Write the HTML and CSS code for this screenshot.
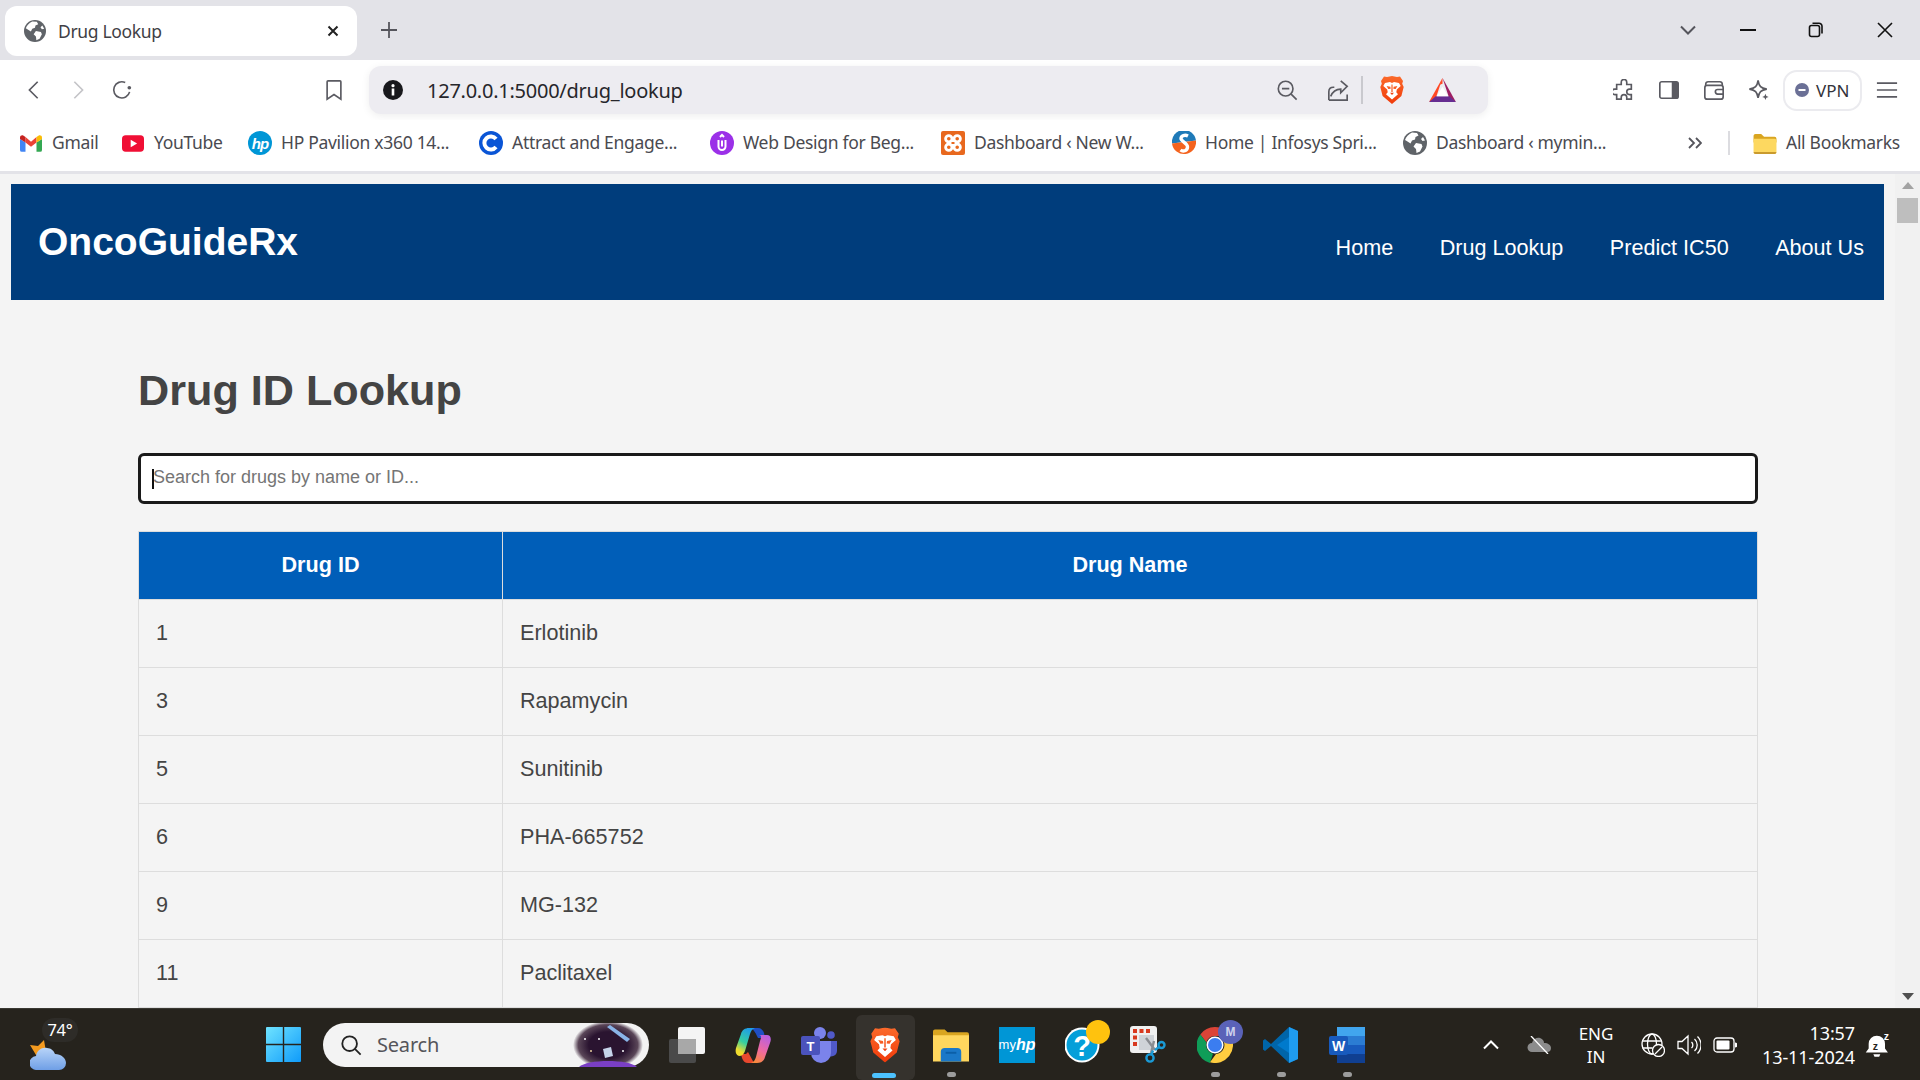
FILE: index.html
```html
<!DOCTYPE html>
<html lang="en">
<head>
<meta charset="utf-8">
<title>Drug Lookup</title>
<link rel="stylesheet" href="styles.css">
</head>
<body>
<svg class="defs" aria-hidden="true">
  <symbol id="globe" viewBox="0 0 24 24">
    <circle cx="12" cy="12" r="12" fill="#5f6368"/>
    <path fill="#fff" d="M9 1.500 14 2l1.500 2.500-3 1.500-.5 2.500-3 1-1.500 3-3-2-2.500-1.500C3 6 5.500 3 9 1.500zM13 12l5.500 1 1 2.500-2.500 5-3.500 1.500-.5-4-2.500-2.500zM20 6l2 3.500-2.500.5-1.500-2z"/>
  </symbol>
  <symbol id="brave" viewBox="0 0 24 28">
    <defs><linearGradient id="braveg" x1="0" y1="0" x2="0" y2="1"><stop offset="0" stop-color="#fb6a2b"/><stop offset="1" stop-color="#f03a0a"/></linearGradient></defs>
    <path fill="url(#braveg)" d="M12 0l5 1 3-.4 3 4.400-.8 2.800 1.500 3.200-2.300 9L12 28l-9.400-8-2.300-9 1.500-3.200L1 5 4 .6 7 1z"/>
    <path fill="#fff" d="M5 7l5-.9 2 .9 2-.9L19 7l1.700 3-3.900 3.400-.5 2.900 1.700 2L12 23.500l-6-5.200 1.700-2-.5-2.900L3.300 10z"/>
    <path fill="url(#braveg)" d="M6.600 10l3.800.7.300 2-2.400.2zM17.400 10l-3.800.7-.3 2 2.400.2zM10 16.800h4l-2 2.200zM11.400 8.500h1.200v7.500h-1.200z"/>
  </symbol>
</svg>

<div class="titlebar">
  <div class="tab">
    <svg class="tab-icon" viewBox="0 0 24 24"><use href="#globe"/></svg>
    <span class="tab-title">Drug Lookup</span>
    <svg class="tab-close" viewBox="0 0 12 12"><path d="M1.500 1.500l9 9M10.500 1.500l-9 9"/></svg>
  </div>
  <svg class="newtab" viewBox="0 0 18 18"><path d="M9 1v16M1 9h16"/></svg>
  <div class="win-controls">
    <svg class="wc-caret" viewBox="0 0 16 10"><path d="M1 1.500l7 7 7-7"/></svg>
    <svg class="wc wc-min" viewBox="0 0 16 16"><path d="M0 8h16"/></svg>
    <svg class="wc wc-max" viewBox="0 0 16 16"><rect x="1.500" y="3.500" width="10" height="11" rx="2"/><path d="M4.500 1.200h6.500a3 3 0 0 1 3 3v7.300"/></svg>
    <svg class="wc wc-close" viewBox="0 0 16 16"><path d="M1 1l14 14M15 1L1 15"/></svg>
  </div>
</div>

<div class="toolbar">
  <div class="tb-cell"><svg class="ic" viewBox="0 0 24 24"><path d="M16 3l-9 9 9 9"/></svg></div>
  <div class="tb-cell"><svg class="ic ic-off" viewBox="0 0 24 24"><path d="M8 3l9 9-9 9"/></svg></div>
  <div class="tb-cell"><svg class="ic" viewBox="0 0 24 24"><path d="M20.300 14A8.800 8.800 0 1 1 15.500 3.900"/><circle class="ic-dot" cx="20" cy="9.500" r="2"/></svg></div>
  <div class="tb-cell tb-bookmark"><svg class="ic" viewBox="0 0 24 24"><path d="M5.500 2h13a1 1 0 0 1 1 1v19L12 17 4.500 22V3a1 1 0 0 1 1-1z"/></svg></div>
  <div class="urlbar">
    <svg class="url-info" viewBox="0 0 20 20"><circle cx="10" cy="10" r="10" fill="#18181c"/><rect x="8.700" y="8.500" width="2.600" height="7" fill="#fff"/><circle cx="10" cy="5.700" r="1.600" fill="#fff"/></svg>
    <span class="url-text">127.0.0.1:5000/drug_lookup</span>
    <div class="url-actions">
      <div class="ua-cell"><svg class="ic" viewBox="0 0 24 24"><circle cx="10.500" cy="10.500" r="8"/><path d="M6.500 10.500h8M16.500 16.500l6 6"/></svg></div>
      <div class="ua-cell"><svg class="ic" viewBox="0 0 24 24"><path d="M2 23V14c0-3 2-5 5-5h1M15 2l7 6-7 7V11c-5 0-9 3-11 8M2 23h20V17"/></svg></div>
      <span class="ua-sep"></span>
      <div class="ua-cell"><svg class="ic-brave" viewBox="0 0 24 28"><use href="#brave"/></svg></div>
      <div class="ua-cell"><svg class="ic-bat" viewBox="0 0 28 26">
        <path fill="#ff4724" d="M14 0L0 25l7-4z"/>
        <path fill="#9e1f63" d="M14 0l14 25-7-4z"/>
        <path fill="#662d91" d="M0 25h28l-7-6H7z"/>
        <path fill="#ff4724" d="M14 0l-3 7 3-1z"/>
        <path fill="#fff" d="M14 9l6 10H8z"/>
      </svg></div>
    </div>
  </div>
  <div class="tb-right">
    <div class="tr-cell"><svg class="ic" viewBox="0 0 24 24"><path d="M9 3.500a3 3 0 0 1 6 0V6h5v5h-2a3 3 0 0 0 0 6h2v5H15v-2a3 3 0 0 0-6 0v2H4v-5H2a3 3 0 0 1 0-6h2V6h5z"/></svg></div>
    <div class="tr-cell"><svg class="ic" viewBox="0 0 24 24"><rect x="2" y="3" width="20" height="18" rx="2"/><path class="ic-fill" d="M15 3h5a2 2 0 0 1 2 2v14a2 2 0 0 1-2 2h-5z"/></svg></div>
    <div class="tr-cell"><svg class="ic" viewBox="0 0 24 24"><path d="M3 7V5.500A2.500 2.500 0 0 1 5.500 3h13A2.500 2.500 0 0 1 21 5.500V7"/><rect x="2" y="7" width="20" height="15" rx="2.500"/><path d="M22 11.500h-6a2.500 2.500 0 0 0 0 5h6"/></svg></div>
    <div class="tr-cell"><svg class="ic" viewBox="0 0 24 24"><path d="M11 1.500c1 6.500 3 8.500 9.500 9.500-6.500 1-8.500 3-9.500 9.500-1-6.500-3-8.500-9.500-9.500 6.500-1 8.500-3 9.500-9.500z"/><path class="ic-fill" d="M19 16l1 2.500 2.500 1-2.500 1-1 2.500-1-2.500-2.500-1 2.500-1z"/></svg></div>
    <div class="vpn"><svg class="vpn-dot" viewBox="0 0 14 14"><circle cx="7" cy="7" r="7" fill="#6b7096"/><rect x="3.500" y="6" width="7" height="2" fill="#fff"/></svg><span>VPN</span></div>
    <div class="tr-cell tr-menu"><svg class="ic" viewBox="0 0 24 24"><path d="M1 4.500h22M1 12h22M1 19.500h22"/></svg></div>
  </div>
</div>

<div class="bookmarks">
  <div class="bm">
    <svg class="bm-icon" viewBox="0 0 24 18"><path fill="#4285f4" d="M2 18h4V8L0 4v12a2 2 0 0 0 2 2z"/><path fill="#34a853" d="M18 18h4a2 2 0 0 0 2-2V4l-6 4z"/><path fill="#ea4335" d="M6 8V2l6 5 6-5v6l-6 4.500z"/><path fill="#fbbc04" d="M18 2v6l6-4V2.500c0-2-2.300-3.100-3.900-2z"/><path fill="#c5221f" d="M0 4l6 4V2L3.900.5C2.300-.6 0 .5 0 2.500z"/></svg>
    <span class="bm-text">Gmail</span>
  </div>
  <div class="bm">
    <svg class="bm-icon" viewBox="0 0 24 18"><rect width="24" height="18" rx="4" fill="#f00f35"/><path fill="#fff" d="M9.500 5l7 4-7 4z"/></svg>
    <span class="bm-text">YouTube</span>
  </div>
  <div class="bm">
    <span class="bm-hp">hp</span>
    <span class="bm-text">HP Pavilion x360 14...</span>
  </div>
  <div class="bm">
    <svg class="bm-icon-tall" viewBox="0 0 24 24"><circle cx="12" cy="12" r="12" fill="#0a55d6"/><path fill="none" stroke="#fff" stroke-width="4" d="M17 8a6.500 6.500 0 1 0 0 8"/></svg>
    <span class="bm-text">Attract and Engage...</span>
  </div>
  <div class="bm">
    <svg class="bm-icon-tall" viewBox="0 0 24 24"><circle cx="12" cy="12" r="12" fill="#9b30e8"/><path fill="none" stroke="#fff" stroke-width="2" d="M8.500 9v6.500a3.500 3.500 0 0 0 7 0V9"/><path fill="none" stroke="#fff" stroke-width="2" d="M12 9.500v6M10 6l2-2 2 2"/></svg>
    <span class="bm-text">Web Design for Beg...</span>
  </div>
  <div class="bm">
    <svg class="bm-icon-tall" viewBox="0 0 24 24"><rect width="24" height="24" rx="2" fill="#e8681e"/><g fill="none" stroke="#fff" stroke-width="2.800"><circle cx="7.800" cy="7.800" r="3.200"/><circle cx="16.200" cy="7.800" r="3.200"/><circle cx="7.800" cy="16.200" r="3.200"/><circle cx="16.200" cy="16.200" r="3.200"/></g><path fill="#fff" d="M9 9h6v6H9z"/><path fill="#e8681e" d="M10.500 11h3v2h-3z"/></svg>
    <span class="bm-text">Dashboard ‹ New W...</span>
  </div>
  <div class="bm">
    <svg class="bm-icon-tall" viewBox="0 0 24 24"><path fill="#1f7ab8" d="M0 12.500a12 12 0 0 1 24-3z"/><path fill="#f4631e" d="M0 12.500l24-3A12 12 0 0 1 0 12.500z"/><path fill="none" stroke="#fff" stroke-width="3.400" d="M16 5c-3-1.500-7-.5-7 2.500s6.500 4.500 6.500 8.500-4.500 5-7 3"/></svg>
    <span class="bm-text">Home | Infosys Spri...</span>
  </div>
  <div class="bm">
    <svg class="bm-icon-tall" viewBox="0 0 24 24"><use href="#globe"/></svg>
    <span class="bm-text">Dashboard ‹ mymin...</span>
  </div>
  <svg class="bm-more" viewBox="0 0 14 12"><path d="M1 1l5 5-5 5M8 1l5 5-5 5"/></svg>
  <span class="bm-sep"></span>
  <div class="bm-all">
    <svg class="bm-folder" viewBox="0 0 24 22"><path fill="#d9a520" d="M0 3a2 2 0 0 1 2-2h6l3 3h11a2 2 0 0 1 2 2v4H0z"/><path fill="#fdd860" d="M0 6h22a2 2 0 0 1 2 2v12a2 2 0 0 1-2 2H2a2 2 0 0 1-2-2z"/><path fill="#c99a2e" d="M0 20h24a2 2 0 0 1-2 2H2a2 2 0 0 1-2-2z"/></svg>
    <span class="bm-text">All Bookmarks</span>
  </div>
</div>

<div class="viewport">
  <div class="page">
    <header class="site-header">
      <div class="logo">OncoGuideRx</div>
      <nav class="site-nav">
        <a>Home</a><a>Drug Lookup</a><a>Predict IC50</a><a>About Us</a>
      </nav>
    </header>
    <main class="content">
      <h1 class="title">Drug ID Lookup</h1>
      <div class="search-wrap">
        <input class="search" type="text" placeholder="Search for drugs by name or ID...">
        <span class="caret"></span>
      </div>
      <table class="drugs">
        <thead><tr><th class="col-id">Drug ID</th><th>Drug Name</th></tr></thead>
        <tbody>
          <tr><td>1</td><td>Erlotinib</td></tr>
          <tr><td>3</td><td>Rapamycin</td></tr>
          <tr><td>5</td><td>Sunitinib</td></tr>
          <tr><td>6</td><td>PHA-665752</td></tr>
          <tr><td>9</td><td>MG-132</td></tr>
          <tr><td>11</td><td>Paclitaxel</td></tr>
        </tbody>
      </table>
    </main>
  </div>
  <div class="scrollbar">
    <span class="sb-up"></span>
    <span class="sb-thumb"></span>
    <span class="sb-down"></span>
  </div>
</div>

<footer class="taskbar">
  <div class="weather">
    <svg class="weather-icon" viewBox="0 0 36 30">
      <path fill="#f39a1f" d="M0 5l8 1 6-6 2 12-10 3z"/>
      <defs><linearGradient id="cloud" x1="0" y1="0" x2="0" y2="1"><stop offset="0" stop-color="#b8d4f8"/><stop offset="1" stop-color="#6f9fe6"/></linearGradient></defs>
      <path fill="url(#cloud)" d="M7 30a7 7 0 0 1-1-14c1-6 6-9 11-8 4 0 7 3 8 6 6 0 11 4 11 9a7 7 0 0 1-7 7z"/>
    </svg>
    <span class="temp">74°</span>
  </div>
  <div class="start">
    <svg viewBox="0 0 35 35"><defs><linearGradient id="win" x1="0" y1="0" x2="1" y2="1"><stop offset="0" stop-color="#6fe3ff"/><stop offset="1" stop-color="#0f9bfa"/></linearGradient></defs><path fill="url(#win)" d="M1 0h15.800v16.800H0V1a1 1 0 0 1 1-1zM18.200 0H34a1 1 0 0 1 1 1v15.800H18.200zM0 18.200h16.800V35H1a1 1 0 0 1-1-1zM18.200 18.200H35V34a1 1 0 0 1-1 1H18.200z"/></svg>
  </div>
  <div class="ts-search">
    <svg class="ts-glass" viewBox="0 0 24 24"><circle cx="10.500" cy="10.500" r="8"/><path d="M16.500 16.500l6 6"/></svg>
    <span class="ts-label">Search</span>
    <svg class="ts-art" viewBox="0 0 70 44">
      <defs><radialGradient id="space"><stop offset=".55" stop-color="#2a1430"/><stop offset=".85" stop-color="#5a4658"/><stop offset="1" stop-color="#f3f3f3"/></radialGradient></defs>
      <ellipse cx="35" cy="22" rx="35" ry="24" fill="url(#space)"/>
      <path fill="#7a3fc4" d="M6 44c8-8 50-8 58 0z"/>
      <path fill="#8ab4e8" d="M34 4l3-2 20 14-3 3z"/>
      <path fill="#c6d4ea" d="M30 26l8-2 2 9-8 2z"/>
      <circle cx="12" cy="16" r="1" fill="#fff"/><circle cx="26" cy="16" r="1" fill="#fff"/><circle cx="50" cy="28" r="1" fill="#fff"/><circle cx="18" cy="28" r="1" fill="#e8d0a0"/>
    </svg>
  </div>
  <div class="apps">
    <div class="app"><svg class="app-icon" viewBox="0 0 36 36"><rect x="0" y="12" width="27" height="24" rx="2" fill="#4a4a4a"/><rect x="9" y="0" width="27" height="27" rx="2" fill="#f4f4f4"/><rect x="9" y="12" width="18" height="15" fill="#a8a8a8"/></svg></div>
    <div class="app"><svg class="app-icon" viewBox="0 0 36 36">
      <defs>
        <linearGradient id="cp1" x1=".6" y1="0" x2=".2" y2="1"><stop offset="0" stop-color="#1f9de8"/><stop offset=".5" stop-color="#35cfa0"/><stop offset=".85" stop-color="#f0dc2e"/></linearGradient>
        <linearGradient id="cp2" x1=".7" y1="0" x2=".3" y2="1"><stop offset="0" stop-color="#b85fe0"/><stop offset=".55" stop-color="#f06aa0"/><stop offset="1" stop-color="#f9893c"/></linearGradient>
      </defs>
      <path fill="#1f4fc4" d="M16 1h7c3 0 5 2 6 5l1 5h-7c-2-4-3-7-7-10z"/>
      <path fill="#e8482e" d="M13 25l6 11h-6c-3 0-5-2-6-5l-1-4h5z"/>
      <path fill="url(#cp1)" d="M14 1h6c-3 1-4 3-5 6L10 24c-1 3-3 5-6 5-3-1-4-4-3-8L6 7c1-4 4-6 8-6z"/>
      <path fill="url(#cp2)" d="M24 8h8c3 0 5 3 3 8l-5 14c-1 4-4 6-8 6h-6c3-1 4-3 5-6l4-16c1-3 2-6 -1-6z"/>
    </svg></div>
    <div class="app"><svg class="app-icon" viewBox="0 0 36 36"><circle cx="19" cy="6" r="6" fill="#7b83eb"/><circle cx="30" cy="8" r="3.800" fill="#5059c9"/><path fill="#5059c9" d="M26 14h10v10a6 6 0 0 1-10 4z"/><path fill="#7b83eb" d="M10 14h20v12a10 10 0 0 1-20 0z"/><rect x="0" y="9" width="19" height="19" rx="2" fill="#4b53bc"/><text class="app-t" x="9.500" y="24" text-anchor="middle">T</text></svg></div>
    <div class="app app-active"><svg class="app-brave" viewBox="0 0 24 28"><use href="#brave"/></svg><span class="active-bar"></span></div>
    <div class="app app-run"><svg class="app-icon" viewBox="0 0 37 34"><path fill="#d9a520" d="M0 3a2 2 0 0 1 2-2h10l3 3h20a2 2 0 0 1 2 2v6H0z"/><path fill="#ffd75e" d="M0 7h37v27H0z"/><path fill="#1a78c8" d="M8 30v-6a4 4 0 0 1 4-4h13a4 4 0 0 1 4 4v10H8z"/><path fill="#0b5fa8" d="M13 24h11v2H13z"/></svg><span class="dot"></span></div>
    <div class="app"><div class="myhp">my<i>hp</i></div></div>
    <div class="app"><svg class="app-icon" viewBox="0 0 36 36"><circle cx="17" cy="18" r="17.500" fill="#fff"/><circle cx="17" cy="18" r="15.500" fill="#049fd9"/><text class="app-q" x="17" y="29" text-anchor="middle">?</text></svg><span class="badge-y"></span></div>
    <div class="app"><svg class="app-icon app-snip" viewBox="0 0 38 38"><rect width="27" height="27" rx="3" fill="#f0f0f0"/><path fill="#d8391f" d="M3 3h4v4H3zM9.500 3h4v4h-4zM16 3h4v4h-4zM3 9.500h4v4H3zM3 16h4v4H3z"/><rect x="9" y="9" width="15" height="15" fill="#cfd3d8"/><path fill="none" stroke="#8a8d92" stroke-width="2.400" d="M16 12l9 12M24 15l-3 12"/><circle cx="31.500" cy="19" r="3" fill="none" stroke="#1a9ad6" stroke-width="2.400"/><circle cx="20" cy="32" r="3.600" fill="none" stroke="#1a9ad6" stroke-width="2.400"/><path stroke="#1a9ad6" stroke-width="2.400" d="M29 21l-4 3M21.500 28.500l1.500-4"/></svg></div>
    <div class="app app-run"><svg class="app-icon" viewBox="0 0 36 36"><path fill="#db4437" d="M18 0a18 18 0 0 1 15.600 9H18a9 9 0 0 0-8.600 6.500L3.300 7.500A18 18 0 0 1 18 0z"/><path fill="#0f9d58" d="M3.300 7.500l6.100 8A9 9 0 0 0 16 26.800L13 36A18 18 0 0 1 3.300 7.500z"/><path fill="#ffcd40" d="M33.600 9A18 18 0 0 1 13 35.300l6-8.400A9 9 0 0 0 26 13z"/><circle cx="18" cy="18" r="8.500" fill="#fff"/><circle cx="18" cy="18" r="7" fill="#3b7df0"/></svg><span class="badge-m">M</span><span class="dot"></span></div>
    <div class="app app-run"><svg class="app-icon" viewBox="0 0 36 36"><path fill="#0065a9" d="M26 0l9 4v28l-9 4L8 19l-6 5-2-1.500V13.500L2 12l6 5z"/><path fill="#1f9cf0" d="M26 0l9 4v28l-9 4z"/><path fill="#007acc" d="M26 10L14 18l12 8z"/></svg><span class="dot"></span></div>
    <div class="app app-run"><svg class="app-icon" viewBox="0 0 36 36"><rect x="8" y="0" width="28" height="36" rx="2" fill="#2b7cd3"/><rect x="8" y="0" width="28" height="9" fill="#41a5ee"/><rect x="8" y="18" width="28" height="9" fill="#185abd"/><rect x="8" y="27" width="28" height="9" fill="#103f91"/><rect x="0" y="9" width="19" height="19" rx="2" fill="#185abd"/><text class="app-w" x="9.500" y="24" text-anchor="middle">W</text></svg><span class="dot"></span></div>
  </div>
  <div class="tray">
    <svg class="tray-caret" viewBox="0 0 16 10"><path d="M1 8.500l7-7 7 7"/></svg>
    <svg class="tray-cloud" viewBox="0 0 24 18"><path fill="#8c8c8c" d="M5 16a4.500 4.500 0 0 1 0-9c1-4 5-6 8-5 3 1 4 3 4 5 4 0 7 2 7 5s-2 4-4 4z"/><path stroke="#fff" stroke-width="1.300" d="M4 0l17 18"/></svg>
    <div class="tray-lang"><span>ENG</span><span>IN</span></div>
    <svg class="tray-ic tray-globe" viewBox="0 0 24 24"><circle cx="11" cy="11" r="10"/><ellipse cx="11" cy="11" rx="4.500" ry="10"/><path d="M1.500 8h19M1.500 15h10"/><circle class="tray-fillbg" cx="17.500" cy="17.500" r="6"/><path d="M14 21l7-7"/></svg>
    <svg class="tray-ic tray-vol" viewBox="0 0 24 24"><path d="M1 8.500h4L11 3v18l-6-5.500H1zM14.500 9a4 4 0 0 1 0 6M17.500 6a8 8 0 0 1 0 12M20.500 3.500a12 12 0 0 1 0 17"/></svg>
    <svg class="tray-ic tray-bat" viewBox="0 0 24 16"><rect x="1" y="1" width="20" height="14" rx="3"/><rect class="tray-fill" x="3.500" y="3.500" width="13" height="9" rx="1"/><path class="tray-fill" d="M22 5.500a2.500 2.500 0 0 1 0 5z"/></svg>
    <div class="clock"><span>13:57</span><span>13-11-2024</span></div>
    <svg class="tray-bell" viewBox="0 0 24 24"><path fill="#fff" d="M11 4a7 7 0 0 0-7 7v4l-2.500 3.500h19L18 15v-4a7 7 0 0 0-7-7zM8 20h6l-1 2H9z"/><text class="bell-z" x="7.500" y="16">z</text><text class="bell-zz" x="17" y="8">z</text></svg>
  </div>
</footer>
</body>
</html>
```
FILE: styles.css
```css
* { box-sizing: border-box; }
html, body { margin: 0; padding: 0; height: 100%; }
body {
  width: 1920px;
  height: 1080px;
  overflow: hidden;
  display: flex;
  flex-direction: column;
  font-family: "Liberation Sans", Arial, sans-serif;
  background: #f4f4f4;
}
.defs { position: absolute; width: 0; height: 0; }

/* browser chrome */
.titlebar {
  height: 60px;
  background: #e3e3e8;
  display: flex;
  align-items: flex-start;
  flex: none;
}
.tab {
  margin: 6px 0 0 5px;
  width: 352px;
  height: 50px;
  background: #fff;
  border-radius: 12px;
  display: flex;
  align-items: center;
  padding: 0 18px 0 19px;
  font: 17.500px "Noto Sans", sans-serif;
  color: #3f3f46;
}
.tab-icon { width: 22px; height: 22px; flex: none; }
.tab-title { margin-left: 12px; letter-spacing: -.35px; }
.tab-close { margin-left: auto; width: 12px; height: 12px; }
.tab-close path { stroke: #222; stroke-width: 2; fill: none; }
.newtab { width: 18px; height: 18px; margin: 21px 0 0 23px; }
.newtab path { stroke: #55555c; stroke-width: 1.800; fill: none; }
.win-controls { margin-left: auto; display: flex; align-items: center; height: 60px; }
.wc-caret { width: 16px; height: 10px; margin-right: 44px; }
.wc-caret path { stroke: #55555c; stroke-width: 2; fill: none; }
.wc { width: 16px; height: 16px; fill: none; stroke: #111; stroke-width: 1.600; }
.wc-min { margin-right: 52px; stroke-width: 2; }
.wc-max { margin-right: 53px; }
.wc-close { margin-right: 27px; }

.toolbar {
  height: 60px;
  background: #fff;
  display: flex;
  align-items: center;
  padding-left: 12px;
  flex: none;
}
.tb-cell { width: 44px; height: 44px; display: flex; align-items: center; justify-content: center; }
.tb-bookmark { margin-left: 168px; }
.ic { width: 22px; height: 22px; fill: none; stroke: #5a5a61; stroke-width: 1.800; }
.ic-off { stroke: #c4c4c8; }
.ic-dot { fill: #5a5a61; stroke: none; }
.ic-fill { fill: #5a5a61; stroke: none; }
.urlbar {
  margin-left: 13px;
  width: 1119px;
  height: 48px;
  background: #edecf1;
  border-radius: 12px;
  box-shadow: 0 2px 8px rgba(0,0,0,.07);
  display: flex;
  align-items: center;
  padding: 0 20px 0 14px;
}
.url-info { width: 20px; height: 20px; flex: none; }
.url-text { margin-left: 24px; font: 20px "Noto Sans", sans-serif; letter-spacing: -.25px; color: #26262b; }
.url-actions { margin-left: auto; display: flex; align-items: center; }
.ua-cell { width: 51px; height: 40px; display: flex; align-items: center; justify-content: center; }
.ua-sep { width: 2px; height: 28px; background: #c9c9ce; margin: 0 3px 0 -2px; }
.ic-brave { width: 24px; height: 28px; }
.ic-bat { width: 27px; height: 25px; }
.tb-right { margin-left: 113px; display: flex; align-items: center; }
.tr-cell { width: 45px; height: 44px; display: flex; align-items: center; justify-content: center; }
.vpn {
  margin-left: 2px;
  width: 79px;
  height: 41px;
  border: 2px solid #ebebef;
  border-radius: 14px;
  display: flex;
  align-items: center;
  padding-left: 10px;
  font: 17px "Noto Sans", sans-serif;
  color: #33333a;
}
.vpn-dot { width: 14px; height: 14px; margin-right: 7px; }
.tr-menu { margin-left: 2px; }

.bookmarks {
  height: 54px;
  background: #fff;
  border-bottom: 3px solid #e3e3e8;
  display: flex;
  align-items: center;
  padding: 0 0 5px 20px;
  font: 17.500px "Noto Sans", sans-serif;
  letter-spacing: -.3px;
  color: #4a4a50;
  flex: none;
}
.bm { display: flex; align-items: center; gap: 9px; width: 231px; white-space: nowrap; flex: none; }
.bm:nth-child(1) { width: 102px; }
.bm:nth-child(2) { width: 126px; }
.bm-text { padding-bottom: 2px; }
.bm-icon { width: 22px; height: 17px; flex: none; margin-right: 1px; }
.bm-icon-tall { width: 24px; height: 24px; flex: none; }
.bm-hp {
  width: 24px; height: 24px; border-radius: 50%; background: #0096d6; color: #fff;
  display: flex; align-items: center; justify-content: center;
  font: italic bold 15px "Liberation Sans", sans-serif; letter-spacing: -1px; flex: none;
}
.bm-more { width: 14px; height: 12px; margin-left: 54px; fill: none; stroke: #55555c; stroke-width: 1.800; flex: none; }
.bm-sep { width: 2px; height: 24px; background: #dcdce0; margin-left: 26px; flex: none; }
.bm-all { margin-left: 23px; display: flex; align-items: center; gap: 9px; white-space: nowrap; }
.bm-folder { width: 24px; height: 21px; }

/* page */
.viewport { flex: 1; min-height: 0; display: flex; overflow: hidden; }
.page { width: 1895px; padding: 10px 11px 0; overflow: hidden; }
.site-header {
  height: 116px;
  background: #003d7c;
  display: flex;
  justify-content: space-between;
  padding: 0 20px 0 27px;
  color: #fff;
}
.logo { font-size: 39px; font-weight: 700; margin-top: 35px; line-height: 45px; }
.site-nav { display: flex; gap: 46.500px; font-size: 21.600px; margin-top: 51px; line-height: 26px; }
.content { margin: 0 126px 0 127px; }
.title { margin: 0; padding-top: 65px; font-size: 43.200px; line-height: 50px; font-weight: 700; color: #444; }
.search-wrap { position: relative; margin-top: 38px; }
.search {
  display: block;
  width: 100%;
  height: 51px;
  border: 3px solid #1a1a1a;
  border-radius: 6px;
  background: #fff;
  padding: 0 12px 2px;
  font: 18px "Liberation Sans", sans-serif;
  color: #333;
  outline: none;
}
.search::placeholder { color: #757575; }
.caret { position: absolute; left: 14px; top: 16px; width: 2px; height: 20px; background: #111; }
.drugs {
  margin-top: 27px;
  width: 100%;
  border-collapse: collapse;
  table-layout: fixed;
  font-size: 21.600px;
  color: #444;
}
.drugs th, .drugs td { border: 1px solid #ddd; padding: 0 17px 2px; text-align: left; }
.drugs th { background: #005eb8; color: #fff; height: 68px; text-align: center; font-weight: 700; }
.drugs td { height: 68px; }
.col-id { width: 364px; }

.scrollbar { width: 25px; background: #f1f1f1; position: relative; flex: none; }
.sb-up, .sb-down { position: absolute; left: 7px; width: 0; height: 0; border-left: 6px solid transparent; border-right: 6px solid transparent; }
.sb-up { top: 8px; border-bottom: 7px solid #a3a3a3; }
.sb-down { bottom: 8px; border-top: 7px solid #505050; }
.sb-thumb { position: absolute; left: 2px; top: 24px; width: 21px; height: 25px; background: #bebebe; }

/* taskbar */
.taskbar {
  height: 72px;
  background: #26231d;
  display: flex;
  align-items: center;
  color: #fff;
  flex: none;
  border-top: 1px solid #3a3832;
  position: relative;
}
.weather { width: 266px; height: 72px; position: relative; flex: none; }
.weather-icon { position: absolute; left: 30px; top: 31px; width: 36px; height: 30px; }
.temp {
  position: absolute; left: 42px; top: 9px; width: 36px; height: 24px; border-radius: 12px;
  background: #2e2c28; text-align: center; font: 16.500px/24px "Noto Sans", sans-serif; letter-spacing: -.3px;
}
.start { width: 35px; height: 35px; flex: none; }
.start svg { display: block; width: 35px; height: 35px; }
.ts-search {
  margin-left: 22px; width: 326px; height: 44px; border-radius: 22px; background: #f3f3f3;
  display: flex; align-items: center; padding-left: 17px; position: relative; flex: none;
}
.ts-glass { width: 22px; height: 22px; fill: none; stroke: #222; stroke-width: 2; }
.ts-label { margin-left: 15px; font: 20px "Noto Sans", sans-serif; color: #55555a; letter-spacing: -.2px; }
.ts-art { position: absolute; right: 6px; top: 0; width: 70px; height: 44px; }
.apps { margin-left: 5px; display: flex; flex: none; }
.app { width: 66px; height: 72px; display: flex; align-items: center; justify-content: center; position: relative; }
.app-icon { width: 36px; height: 36px; }
.app-snip { width: 38px; height: 38px; }
.app-t, .app-w { font: bold 13px "Liberation Sans", sans-serif; fill: #fff; }
.app-w { font-size: 14px; }
.app-q { font: bold 29px "Liberation Sans", sans-serif; fill: #fff; }
.app-active::before {
  content: ""; position: absolute; left: 4px; right: 3px; top: 6px; bottom: 1px;
  background: #35322d; border-radius: 6px;
}
.app-brave { width: 30px; height: 36px; position: relative; }
.active-bar { position: absolute; left: 20px; bottom: 3px; width: 24px; height: 5px; border-radius: 3px; background: #4cc2ff; }
.dot { position: absolute; left: 29px; bottom: 4px; width: 9px; height: 5px; border-radius: 3px; background: #9c9c9c; }
.myhp {
  width: 36px; height: 36px; background: #0096d6; display: flex; align-items: center; justify-content: center;
  font: 13px "Liberation Sans", sans-serif; color: #fff;
}
.myhp i { font-weight: 700; font-size: 16px; }
.badge-y { position: absolute; left: 36px; top: 11px; width: 24px; height: 24px; border-radius: 50%; background: #ffc20e; }
.badge-m {
  position: absolute; left: 36px; top: 11px; width: 25px; height: 24px; border-radius: 50%;
  background: #5a62b8; color: #cfd2ee; font: bold 12px/24px "Liberation Sans", sans-serif; text-align: center;
}
.tray { flex: 1; display: flex; align-items: center; position: relative; height: 72px; padding-left: 103px; }
.tray-caret { width: 16px; height: 10px; fill: none; stroke: #fff; stroke-width: 2; flex: none; }
.tray-cloud { width: 24px; height: 18px; margin-left: 28px; flex: none; }
.tray-lang { width: 50px; margin-left: 20px; display: flex; flex-direction: column; align-items: center; font: 17px/23px "Noto Sans", sans-serif; flex: none; }
.tray-ic { fill: none; stroke: #fff; stroke-width: 1.300; flex: none; }
.tray-globe { width: 24px; height: 24px; margin-left: 20px; }
.tray-fillbg { fill: #26231d; }
.tray-vol { width: 24px; height: 24px; margin-left: 12px; }
.tray-bat { width: 24px; height: 16px; margin-left: 12px; }
.tray-fill { fill: #fff; stroke: none; }
.clock { width: 118px; display: flex; flex-direction: column; align-items: flex-end; font: 18px/24px "Noto Sans", sans-serif; flex: none; letter-spacing: -.1px; }
.tray-bell { width: 28px; height: 28px; margin-left: 9px; flex: none; }
.bell-z { font: bold 9px "Liberation Sans", sans-serif; fill: #26231d; }
.bell-zz { font: bold 9px "Liberation Sans", sans-serif; fill: #fff; }
```
